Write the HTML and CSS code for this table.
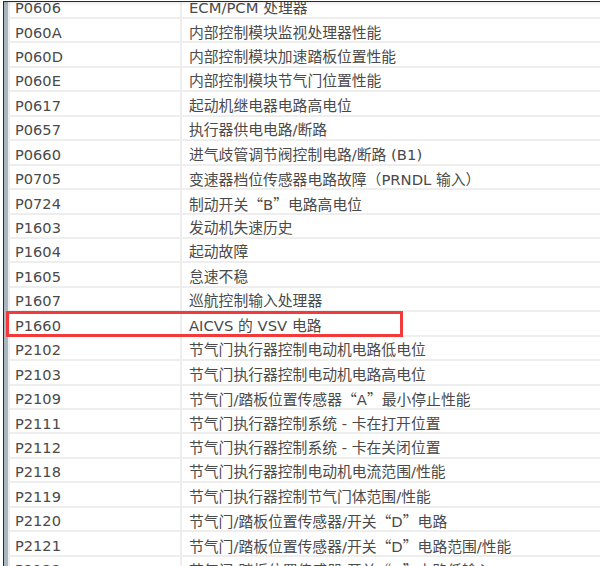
FILE: index.html
```html
<!DOCTYPE html>
<html lang="zh-CN">
<head>
<meta charset="utf-8">
<title>故障码列表</title>
<link rel="stylesheet" href="styles.css">
</head>
<body>
<div class="frame">
  <div class="stripe"></div>
  <div class="table">
    <div class="row"><div class="code">P0606</div><div class="desc">ECM/PCM 处理器</div></div>
    <div class="row"><div class="code">P060A</div><div class="desc">内部控制模块监视处理器性能</div></div>
    <div class="row"><div class="code">P060D</div><div class="desc">内部控制模块加速踏板位置性能</div></div>
    <div class="row"><div class="code">P060E</div><div class="desc">内部控制模块节气门位置性能</div></div>
    <div class="row"><div class="code">P0617</div><div class="desc">起动机继电器电路高电位</div></div>
    <div class="row"><div class="code">P0657</div><div class="desc">执行器供电电路/断路</div></div>
    <div class="row"><div class="code">P0660</div><div class="desc">进气歧管调节阀控制电路/断路 (B1)</div></div>
    <div class="row"><div class="code">P0705</div><div class="desc">变速器档位传感器电路故障<span class="cjk">（</span>PRNDL 输入<span class="cjk">）</span></div></div>
    <div class="row"><div class="code">P0724</div><div class="desc">制动开关<span class="cjk">“</span>B<span class="cjk">”</span>电路高电位</div></div>
    <div class="row"><div class="code">P1603</div><div class="desc">发动机失速历史</div></div>
    <div class="row"><div class="code">P1604</div><div class="desc">起动故障</div></div>
    <div class="row"><div class="code">P1605</div><div class="desc">怠速不稳</div></div>
    <div class="row"><div class="code">P1607</div><div class="desc">巡航控制输入处理器</div></div>
    <div class="row marked"><div class="code">P1660</div><div class="desc">AICVS 的 VSV 电路</div><div class="highlight"></div></div>
    <div class="row"><div class="code">P2102</div><div class="desc">节气门执行器控制电动机电路低电位</div></div>
    <div class="row"><div class="code">P2103</div><div class="desc">节气门执行器控制电动机电路高电位</div></div>
    <div class="row"><div class="code">P2109</div><div class="desc">节气门/踏板位置传感器<span class="cjk">“</span>A<span class="cjk">”</span>最小停止性能</div></div>
    <div class="row"><div class="code">P2111</div><div class="desc">节气门执行器控制系统 - 卡在打开位置</div></div>
    <div class="row"><div class="code">P2112</div><div class="desc">节气门执行器控制系统 - 卡在关闭位置</div></div>
    <div class="row"><div class="code">P2118</div><div class="desc">节气门执行器控制电动机电流范围/性能</div></div>
    <div class="row"><div class="code">P2119</div><div class="desc">节气门执行器控制节气门体范围/性能</div></div>
    <div class="row"><div class="code">P2120</div><div class="desc">节气门/踏板位置传感器/开关<span class="cjk">“</span>D<span class="cjk">”</span>电路</div></div>
    <div class="row"><div class="code">P2121</div><div class="desc">节气门/踏板位置传感器/开关<span class="cjk">“</span>D<span class="cjk">”</span>电路范围/性能</div></div>
    <div class="row"><div class="code">P2122</div><div class="desc">节气门/踏板位置传感器/开关<span class="cjk">“</span>D<span class="cjk">”</span>电路低输入</div></div>
  </div>
</div>
</body>
</html>
```
FILE: styles.css
```css
html, body {
  margin: 0;
  padding: 0;
  background: #ffffff;
}

body {
  font-family: "DejaVu Sans", "Noto Sans CJK SC", sans-serif;
  font-size: 14.6px;
  color: #4a4a4a;
}

.frame {
  position: relative;
  display: flex;
  margin: 1px 0 0 3px;
  height: 565px;
  overflow: hidden;
  border-top: 1px solid #2a2a2a;
  border-left: 1px solid #2a2a2a;
  background: #eeeeee;
}

.frame::before {
  content: "";
  position: absolute;
  left: 0;
  right: 0;
  top: 0;
  height: 4px;
  background: linear-gradient(rgba(0, 0, 0, 0.07), rgba(0, 0, 0, 0));
  z-index: 2;
}

.stripe {
  flex: 0 0 4px;
  margin-right: 2px;
  background: #a8b7bf;
}

.table {
  flex: 1;
  display: flex;
  flex-direction: column;
  gap: 2px;
  margin-top: -7.4px;
}

.row {
  position: relative;
  flex: 0 0 22.44px;
  display: grid;
  grid-template-columns: 170px 1fr;
  column-gap: 2px;
}

.code,
.desc {
  background: #ffffff;
  box-sizing: border-box;
  height: 22.44px;
  padding-top: 5.5px;
  line-height: 16.92px;
  white-space: nowrap;
  overflow: hidden;
}

.code {
  padding-left: 5px;
}

.desc {
  padding-left: 7px;
  font-size: 14.8px;
}

.cjk {
  font-family: "Noto Sans CJK SC", sans-serif;
}

.highlight {
  position: absolute;
  left: -4px;
  top: -1.6px;
  width: 397px;
  height: 26px;
  box-sizing: border-box;
  border: 3px solid #f23a3a;
}
```
